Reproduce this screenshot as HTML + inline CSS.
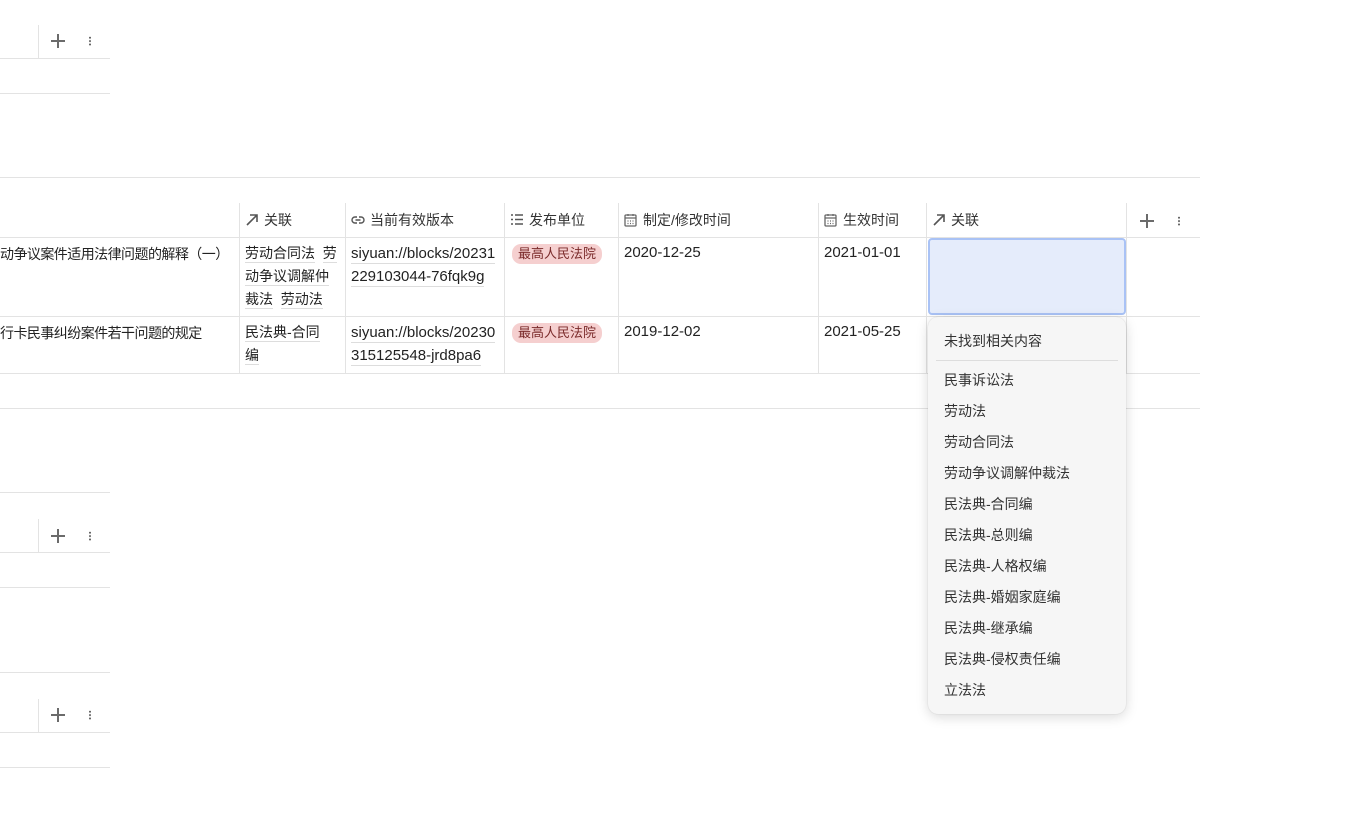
<!DOCTYPE html>
<html><head><meta charset="utf-8"><style>
*{margin:0;padding:0;box-sizing:border-box}
body{width:1358px;height:840px;background:#fff;position:relative;overflow:hidden;font-family:"Liberation Sans","Noto Sans CJK SC",sans-serif;color:#222;font-size:14px}
.h{position:absolute;height:1px;background:#e3e3e3}
.v{position:absolute;width:1px;background:#e3e3e3}
.a{position:absolute;white-space:nowrap}
.plus{position:absolute;width:14px;height:14px}
.plus:before{content:"";position:absolute;left:0;top:6px;width:14px;height:2px;background:#6b6b6b}
.plus:after{content:"";position:absolute;left:6px;top:0;width:2px;height:14px;background:#6b6b6b}
.dots{position:absolute;width:2px;height:10px;background:radial-gradient(circle,#666 0.9px,transparent 1.1px) 0 0/2px 3.4px}
.hd{color:#333;font-size:14px}
.u{border-bottom:1px solid #ddd;padding-bottom:1px}
.n{font-size:15px}
.tag{position:absolute;background:#f5cfcf;color:#7a2a2a;border-radius:9px;padding:0 6px;font-size:13px;line-height:20px}
.mi{position:absolute;left:944px;font-size:14px;color:#333}
</style></head><body>
<div class="v" style="left:38px;top:25px;height:33px"></div>
<div class="h" style="left:0;top:58px;width:110px"></div>
<div class="plus" style="left:51px;top:34px"></div><div class="dots" style="left:89px;top:36px"></div>
<div class="h" style="left:0;top:93px;width:110px"></div>
<div class="h" style="left:0;top:177px;width:1200px"></div>
<div class="h" style="left:0;top:237px;width:1200px"></div>
<div class="h" style="left:0;top:316px;width:1200px"></div>
<div class="h" style="left:0;top:373px;width:1200px"></div>
<div class="h" style="left:0;top:408px;width:1200px"></div>
<div class="v" style="left:239px;top:203px;height:170px"></div>
<div class="v" style="left:345px;top:203px;height:170px"></div>
<div class="v" style="left:504px;top:203px;height:170px"></div>
<div class="v" style="left:618px;top:203px;height:170px"></div>
<div class="v" style="left:818px;top:203px;height:170px"></div>
<div class="v" style="left:926px;top:203px;height:170px"></div>
<div class="v" style="left:1126px;top:203px;height:170px"></div>
<svg class="a" style="left:245px;top:213px" width="14" height="14" viewBox="0 0 14 14"><path d="M2 12L12 2M5 2h7v7" stroke="#555" stroke-width="1.6" fill="none"/></svg>
<div class="a hd" style="left:264px;top:210px">关联</div>
<svg class="a" style="left:351px;top:214px" width="14" height="12" viewBox="0 0 14 12"><path d="M6 3H4a3 3 0 000 6h2M8 3h2a3 3 0 010 6H8M4.5 6h5" stroke="#555" stroke-width="1.4" fill="none"/></svg>
<div class="a hd" style="left:370px;top:210px">当前有效版本</div>
<svg class="a" style="left:510px;top:213px" width="14" height="13" viewBox="0 0 14 13"><path d="M1 2h2M5 2h8M1 6.5h2M5 6.5h8M1 11h2M5 11h8" stroke="#555" stroke-width="1.4"/></svg>
<div class="a hd" style="left:529px;top:210px">发布单位</div>
<svg class="a" style="left:624px;top:213px" width="13" height="14" viewBox="0 0 13 14"><rect x="1" y="2" width="11" height="11" rx="1" stroke="#666" stroke-width="1.3" fill="none"/><path d="M1 5h11M4 1v2M9 1v2M3.5 8h1M6 8h1M8.5 8h1M3.5 10.5h1M6 10.5h1M8.5 10.5h1" stroke="#666" stroke-width="1.2"/></svg>
<div class="a hd" style="left:643px;top:210px">制定/修改时间</div>
<svg class="a" style="left:824px;top:213px" width="13" height="14" viewBox="0 0 13 14"><rect x="1" y="2" width="11" height="11" rx="1" stroke="#666" stroke-width="1.3" fill="none"/><path d="M1 5h11M4 1v2M9 1v2M3.5 8h1M6 8h1M8.5 8h1M3.5 10.5h1M6 10.5h1M8.5 10.5h1" stroke="#666" stroke-width="1.2"/></svg>
<div class="a hd" style="left:843px;top:210px">生效时间</div>
<svg class="a" style="left:932px;top:213px" width="14" height="14" viewBox="0 0 14 14"><path d="M2 12L12 2M5 2h7v7" stroke="#555" stroke-width="1.6" fill="none"/></svg>
<div class="a hd" style="left:951px;top:210px">关联</div>
<div class="plus" style="left:1140px;top:214px"></div><div class="dots" style="left:1178px;top:216px"></div>
<div class="a" style="left:0;top:244px;letter-spacing:-0.55px">动争议案件适用法律问题的解释（一）</div>
<div class="a" style="left:245px;top:242px;line-height:23px"><span class="u">劳动合同法</span>&nbsp; <span class="u">劳</span><br><span class="u">动争议调解仲</span><br><span class="u">裁法</span>&nbsp; <span class="u">劳动法</span></div>
<div class="a n" style="left:351px;top:242px;line-height:23px"><span class="u">siyuan://blocks/20231</span><br><span class="u">229103044-76fqk9g</span></div>
<div class="tag" style="left:512px;top:244px">最高人民法院</div>
<div class="a n" style="left:624px;top:244px">2020-12-25</div>
<div class="a n" style="left:824px;top:244px">2021-01-01</div>
<div class="a" style="left:928px;top:238px;width:198px;height:77px;background:#e5ecfb;border:2px solid #a9c2f5;border-radius:4px"></div>
<div class="a" style="left:0;top:323px;letter-spacing:-0.55px">行卡民事纠纷案件若干问题的规定</div>
<div class="a" style="left:245px;top:321px;line-height:23px"><span class="u">民法典-合同</span><br><span class="u">编</span></div>
<div class="a n" style="left:351px;top:321px;line-height:23px"><span class="u">siyuan://blocks/20230</span><br><span class="u">315125548-jrd8pa6</span></div>
<div class="tag" style="left:512px;top:323px">最高人民法院</div>
<div class="a n" style="left:624px;top:323px">2019-12-02</div>
<div class="a n" style="left:824px;top:323px">2021-05-25</div>
<div class="h" style="left:0;top:492px;width:110px"></div>
<div class="v" style="left:38px;top:519px;height:33px"></div>
<div class="h" style="left:0;top:552px;width:110px"></div>
<div class="plus" style="left:51px;top:529px"></div><div class="dots" style="left:89px;top:531px"></div>
<div class="h" style="left:0;top:587px;width:110px"></div>
<div class="h" style="left:0;top:672px;width:110px"></div>
<div class="v" style="left:38px;top:699px;height:33px"></div>
<div class="h" style="left:0;top:732px;width:110px"></div>
<div class="plus" style="left:51px;top:708px"></div><div class="dots" style="left:89px;top:710px"></div>
<div class="h" style="left:0;top:767px;width:110px"></div>
<div class="a" style="left:928px;top:317px;width:198px;height:397px;background:#f6f6f6;border-radius:10px;box-shadow:0 3px 12px rgba(0,0,0,.15),0 0 1px rgba(0,0,0,.2)"></div>
<div class="mi" style="top:331px">未找到相关内容</div>
<div class="a" style="left:936px;top:360px;width:182px;height:1px;background:#ddd"></div>
<div class="mi" style="top:370px">民事诉讼法</div>
<div class="mi" style="top:401px">劳动法</div>
<div class="mi" style="top:432px">劳动合同法</div>
<div class="mi" style="top:463px">劳动争议调解仲裁法</div>
<div class="mi" style="top:494px">民法典-合同编</div>
<div class="mi" style="top:525px">民法典-总则编</div>
<div class="mi" style="top:556px">民法典-人格权编</div>
<div class="mi" style="top:587px">民法典-婚姻家庭编</div>
<div class="mi" style="top:618px">民法典-继承编</div>
<div class="mi" style="top:649px">民法典-侵权责任编</div>
<div class="mi" style="top:680px">立法法</div>
</body></html>
